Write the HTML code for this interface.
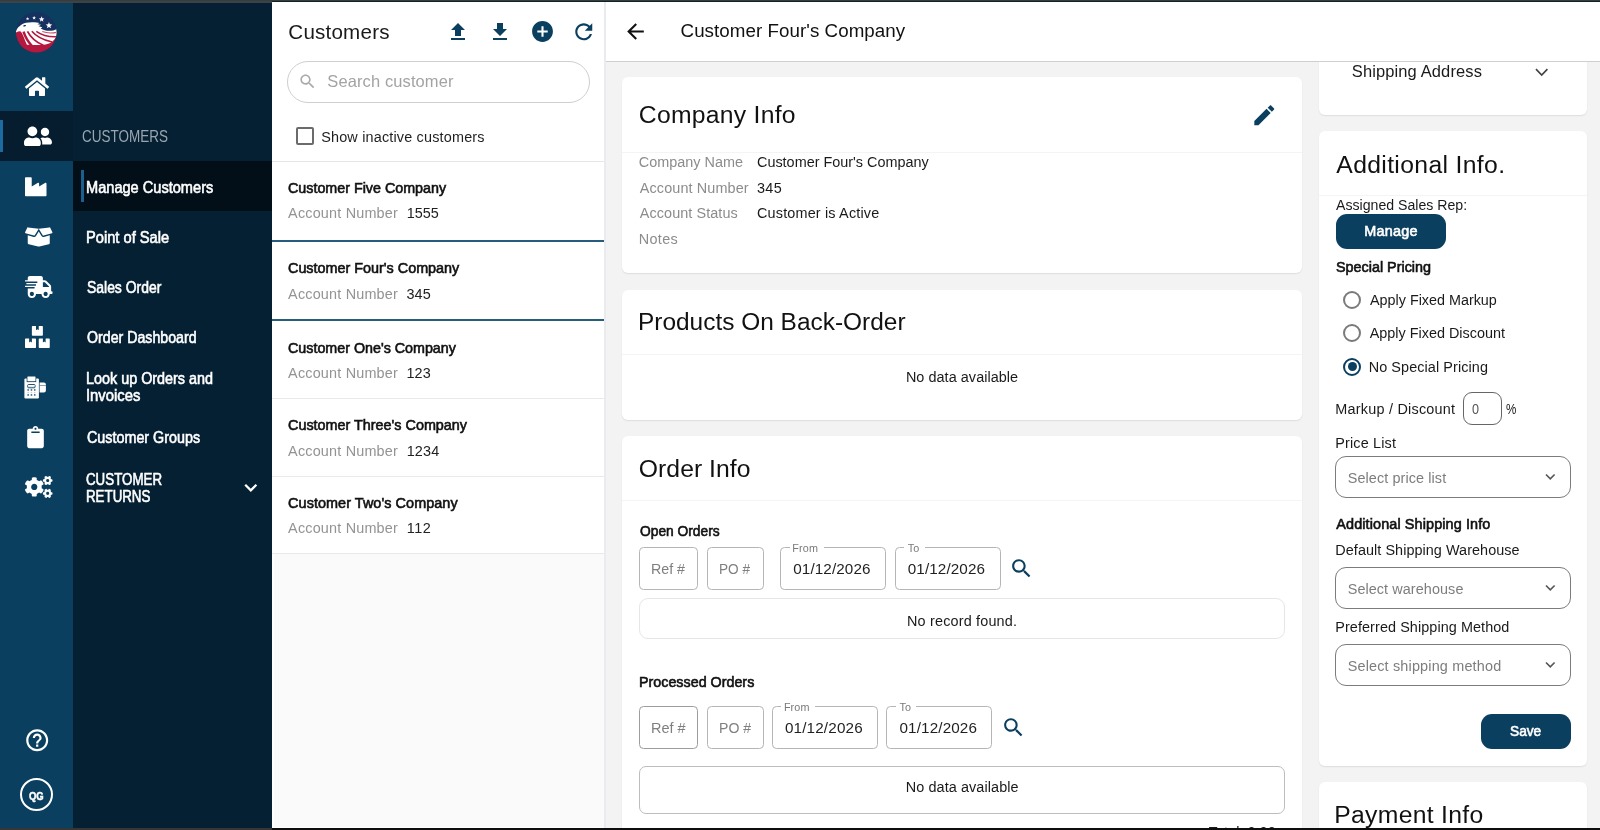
<!DOCTYPE html>
<html lang="en">
<head>
<meta charset="utf-8">
<title>Customers</title>
<style>
html,body{margin:0;padding:0;height:830px;overflow:hidden;}
body{width:1600px;height:830px;overflow:hidden;position:relative;background:#f3f3f3;font-family:"Liberation Sans",sans-serif;}
.a{position:absolute;display:block;}
.t{position:absolute;white-space:nowrap;line-height:1;transform-origin:0 0;font-family:"Liberation Sans",sans-serif;}
.b{font-weight:700;}
.m{-webkit-text-stroke:0.6px currentColor;}
.s{-webkit-text-stroke:0.6px currentColor;}
.card{position:absolute;background:#fff;border-radius:6px;box-shadow:0 1px 1.5px rgba(0,0,0,.09);}
.hr{position:absolute;height:1px;background:#f4f4f4;}
.inp{position:absolute;box-sizing:border-box;border:1px solid #b5b5b5;border-radius:4.5px;background:#fff;}
.sel{position:absolute;box-sizing:border-box;border:1px solid #7c7c7c;border-radius:11px;background:#fff;}
.btn{position:absolute;background:#0b3f5f;border-radius:11px;}
.lbl{position:absolute;background:#fff;height:3px;}
svg{position:absolute;overflow:visible;}
</style>
</head>
<body>
<div id="app" style="position:absolute;left:0;top:0;width:1600px;height:830px;overflow:hidden;">
<!-- ===== backgrounds ===== -->
<div class="a" id="rail" style="left:0;top:0;width:73px;height:830px;background:#0b3f5f;"></div>
<div class="a" id="side" style="left:73px;top:0;width:199px;height:830px;background:#062033;"></div>
<div class="a" style="left:0;top:111px;width:73px;height:50px;background:#051d2e;"></div>
<div class="a" style="left:0;top:120px;width:3px;height:32px;background:#1b6aa0;"></div>
<div class="a" style="left:73px;top:161px;width:199px;height:50px;background:#020e18;"></div>
<div class="a" style="left:81px;top:170px;width:3px;height:32px;background:#1c5f8c;"></div>

<div class="a" id="list" style="left:272px;top:0;width:332px;height:830px;background:#fafafa;"></div>
<div class="a" style="left:272px;top:0;width:332px;height:553px;background:#fff;"></div>
<div class="a" style="left:272px;top:553px;width:2.3px;height:277px;background:#fff;"></div>
<div class="a" style="left:272px;top:826.8px;width:332px;height:2px;background:#fff;"></div>
<div class="a" style="left:604px;top:0;width:2px;height:830px;background:#eaebee;"></div>
<!-- list dividers -->
<div class="a" style="left:272px;top:161px;width:332px;height:1px;background:#e6e6e6;"></div>
<div class="a" style="left:272px;top:240px;width:332px;height:2px;background:#265c7e;"></div>
<div class="a" style="left:272px;top:319px;width:332px;height:2px;background:#265c7e;"></div>
<div class="a" style="left:272px;top:398px;width:332px;height:1px;background:#e9e9e9;"></div>
<div class="a" style="left:272px;top:476px;width:332px;height:1px;background:#e9e9e9;"></div>
<div class="a" style="left:272px;top:553px;width:332px;height:1px;background:#e9e9e9;"></div>
<!-- search box -->
<div class="a" style="left:287px;top:61px;width:303px;height:42px;box-sizing:border-box;border:1px solid #cfcfcf;border-radius:21px;background:#fff;"></div>
<!-- checkbox -->
<div class="a" style="left:296px;top:127px;width:18px;height:18px;box-sizing:border-box;border:2px solid #6b6b6b;border-radius:2px;background:#fff;"></div>

<!-- ===== cards (main column) ===== -->
<div class="card" style="left:622px;top:77px;width:680px;height:196px;"></div>
<div class="hr" style="left:622px;top:152px;width:680px;"></div>
<div class="card" style="left:622px;top:290px;width:680px;height:130px;"></div>
<div class="hr" style="left:622px;top:354px;width:680px;"></div>
<div class="card" style="left:622px;top:436px;width:680px;height:420px;"></div>
<div class="hr" style="left:622px;top:500px;width:680px;"></div>

<!-- open orders inputs -->
<div class="inp" style="left:639px;top:547px;width:59px;height:43px;"></div>
<div class="inp" style="left:707px;top:547px;width:57px;height:43px;"></div>
<div class="inp" style="left:780px;top:547px;width:106px;height:43px;"></div>
<div class="lbl" style="left:789.5px;top:546px;width:34px;"></div>
<div class="inp" style="left:895px;top:547px;width:106px;height:43px;"></div>
<div class="lbl" style="left:904px;top:546px;width:20.5px;"></div>
<div class="a" style="left:639px;top:598px;width:646px;height:41px;box-sizing:border-box;border:1px solid #e6e6e6;border-radius:9px;background:#fff;"></div>
<!-- processed orders inputs -->
<div class="inp" style="left:639px;top:706px;width:59px;height:43px;border-color:#9d9d9d;"></div>
<div class="inp" style="left:707px;top:706px;width:57px;height:43px;"></div>
<div class="inp" style="left:772px;top:706px;width:106px;height:43px;"></div>
<div class="lbl" style="left:781px;top:705px;width:34px;"></div>
<div class="inp" style="left:886px;top:706px;width:106px;height:43px;"></div>
<div class="lbl" style="left:895.5px;top:705px;width:20.5px;"></div>
<div class="a" style="left:639px;top:766px;width:646px;height:48px;box-sizing:border-box;border:1px solid #bdbdbd;border-radius:7px;background:#fff;"></div>

<!-- ===== right column ===== -->
<div class="card" style="left:1319px;top:40px;width:268px;height:75px;"></div>
<div class="card" style="left:1319px;top:131px;width:268px;height:634.5px;"></div>
<div class="hr" style="left:1319px;top:195px;width:268px;"></div>
<div class="card" style="left:1319px;top:782px;width:268px;height:80px;"></div>
<div class="btn" style="left:1336px;top:213.5px;width:110px;height:35px;"></div>
<!-- radios -->
<div class="a" style="left:1343px;top:290.5px;width:18px;height:18px;box-sizing:border-box;border:2px solid #7a7a7a;border-radius:50%;background:#fff;"></div>
<div class="a" style="left:1343px;top:324px;width:18px;height:18px;box-sizing:border-box;border:2px solid #7a7a7a;border-radius:50%;background:#fff;"></div>
<div class="a" style="left:1343px;top:357.5px;width:18px;height:18px;box-sizing:border-box;border:2px solid #0b3f5f;border-radius:50%;background:#fff;"></div>
<div class="a" style="left:1347.5px;top:362px;width:9px;height:9px;border-radius:50%;background:#0b3f5f;"></div>
<!-- markup input -->
<div class="a" style="left:1463px;top:392px;width:38.5px;height:33px;box-sizing:border-box;border:1px solid #666;border-radius:9px;background:#fff;"></div>
<!-- selects -->
<div class="sel" style="left:1335px;top:456px;width:235.5px;height:42px;"></div>
<div class="sel" style="left:1335px;top:567px;width:235.5px;height:42px;"></div>
<div class="sel" style="left:1335px;top:644px;width:235.5px;height:42px;"></div>
<div class="btn" style="left:1481px;top:713.5px;width:89.5px;height:35.5px;"></div>

<!-- ===== header (over cards) ===== -->
<div class="a" id="hdr" style="left:606px;top:0;width:994px;height:61px;background:#fff;border-bottom:1px solid #cfcfcf;"></div>

<!-- logo -->
<svg id="logo" style="left:16.3px;top:11.5px;" width="40.6" height="40.6" viewBox="0 0 41 41">
  <defs><clipPath id="lc"><circle cx="20.5" cy="20.5" r="20.5"/></clipPath></defs>
  <g clip-path="url(#lc)">
    <rect x="0" y="0" width="41" height="41" fill="#16305f"/>
    <path d="M-1 42 L-1 19 L20 19.500 L42 20.500 L42 42 Z" fill="#b5173f"/>
    <path fill="#fff" d="M-0.5 20.8 C0.3 17.5 1.8 15.6 3.6 14.3 C5.5 12.6 7.6 11.3 10 10.8 C13.5 10.1 17.5 10.1 20.9 10.5 L23.8 11 L21.6 12.3 L25.3 12.8 L22.8 14.3 L26.6 15.3 L25 16.6 C27.5 18.2 30.5 19 33.5 19 C36.5 19 39 18.3 41.5 17 L41.5 22.5 C40.5 25.5 39.5 27.3 38 28.6 C36.5 30.3 34.5 31.6 32.5 32 C29 33 25.5 33.4 22 33.4 L16.5 33.3 L11 33.2 C9.8 30.5 8.6 27.5 7.6 24.8 C6.9 22.8 6 20.9 4.6 19.6 C3.2 19.4 1.6 19.9 -0.5 20.8 Z"/>
    <path d="M7.6 19.9 Q 10.2 28 16 34.2" fill="none" stroke="#b5173f" stroke-width="2.5"/>
    <path d="M11.6 19.6 Q 16.5 29 27.5 33.6" fill="none" stroke="#b5173f" stroke-width="1.8"/>
    <path d="M16 19.5 Q 22.5 27.3 36.5 30.4" fill="none" stroke="#b5173f" stroke-width="1.6"/>
    <path d="M20.5 19.6 Q 28.5 25.4 41 25" fill="none" stroke="#b5173f" stroke-width="1.4"/>
    <path d="M26.5 19.8 Q 33 22.2 41 20.6" fill="none" stroke="#b5173f" stroke-width="1.1" opacity=".75"/>
    <ellipse cx="8.7" cy="13.9" rx="1.5" ry="0.75" fill="#16305f" transform="rotate(-12 8.7 13.9)"/>
    <polygon fill="#fff" points="11.70,5.00 12.17,6.25 13.51,6.31 12.46,7.15 12.82,8.44 11.70,7.70 10.58,8.44 10.94,7.15 9.89,6.31 11.23,6.25"/>
    <polygon fill="#fff" points="18.30,3.80 18.82,5.19 20.30,5.25 19.14,6.17 19.53,7.60 18.30,6.78 17.07,7.60 17.46,6.17 16.30,5.25 17.78,5.19"/>
    <polygon fill="#fff" points="25.90,4.40 26.64,6.38 28.75,6.47 27.10,7.79 27.66,9.83 25.90,8.66 24.14,9.83 24.70,7.79 23.05,6.47 25.16,6.38"/>
    <polygon fill="#fff" points="33.30,10.10 34.16,12.41 36.63,12.52 34.70,14.05 35.36,16.43 33.30,15.07 31.24,16.43 31.90,14.05 29.97,12.52 32.44,12.41"/>
  </g>
</svg>

<!-- rail: home (FA) 24x~20 @ center (37,86) -->
<svg style="left:25px;top:75.5px;" width="24" height="21.33" viewBox="0 0 576 512"><path fill="#fff" d="M280.37 148.26L96 300.11V464a16 16 0 0 0 16 16l112.06-.29a16 16 0 0 0 15.920-16V368a16 16 0 0 1 16-16h64a16 16 0 0 1 16 16v95.640a16 16 0 0 0 16 16.050L464 480a16 16 0 0 0 16-16V300L295.670 148.260a12.190 12.190 0 0 0-15.300 0zM571.600 251.470L488 182.560V44.050a12 12 0 0 0-12-12h-56a12 12 0 0 0-12 12v72.610L318.470 43a48 48 0 0 0-61 0L4.340 251.470a12 12 0 0 0-1.600 16.900l25.500 31A12 12 0 0 0 45.150 301l235.220-193.740a12.190 12.190 0 0 1 15.300 0L530.900 301a12 12 0 0 0 16.900-1.600l25.500-31a12 12 0 0 0-1.700-16.930z"/></svg>

<!-- users (FA user-friends) 28x22.4 -->
<svg style="left:24px;top:125.3px;" width="28" height="22.4" viewBox="0 0 640 512"><path fill="#fff" d="M192 256c61.900 0 112-50.100 112-112S253.900 32 192 32 80 82.100 80 144s50.100 112 112 112zm76.800 32h-8.300c-20.800 10-43.900 16-68.500 16s-47.600-6-68.500-16h-8.300C51.600 288 0 339.600 0 403.200V432c0 26.500 21.500 48 48 48h288c26.500 0 48-21.500 48-48v-28.800c0-63.600-51.600-115.200-115.200-115.200zM480 256c53 0 96-43 96-96s-43-96-96-96-96 43-96 96 43 96 96 96zm48 32h-3.800c-13.900 4.800-28.600 8-44.200 8s-30.300-3.200-44.200-8H432c-20.400 0-39.200 5.900-55.700 15.400 24.400 26.300 39.700 61.200 39.700 99.800v38.400c0 2.200-.5 4.300-.6 6.400H592c26.500 0 48-21.500 48-48 0-61.900-50.100-112-112-112z"/></svg>

<!-- industry (FA) 22x22 -->
<svg style="left:24.500px;top:175.500px;" width="21.500" height="21.500" viewBox="0 0 512 512"><path fill="#fff" d="M475.115 163.781L336 252.309v-68.280c0-18.916-20.931-30.399-36.885-20.248L160 252.309V56c0-13.255-10.745-24-24-24H24C10.745 32 0 42.745 0 56v400c0 13.255 10.745 24 24 24h464c13.255 0 24-10.745 24-24V184.029c0-18.917-20.931-30.399-36.885-20.248z"/></svg>

<!-- box-open (FA) 27.5x22 -->
<svg style="left:24.500px;top:225.700px;" width="27.500" height="22" viewBox="0 0 640 512"><path fill="#fff" d="M425.700 256c-16.900 0-32.800-9-41.400-23.400L320 126l-64.200 106.600c-8.700 14.500-24.600 23.500-41.500 23.500-4.500 0-9-.6-13.300-1.900L64 215v178c0 14.700 10 27.500 24.200 31l216.200 54.100c10.200 2.500 20.900 2.500 31 0L551.800 424c14.200-3.600 24.200-16.400 24.200-31V215l-137 39.100c-4.300 1.300-8.800 1.900-13.300 1.900zm212.600-112.200L586.800 41c-3.100-6.200-9.800-9.800-16.700-8.900L320 64l91.700 152.100c3.800 6.300 11.400 9.300 18.500 7.300l197.900-56.500c9.900-2.900 14.700-13.900 10.200-23.100zM53.200 41L1.700 143.800c-4.600 9.200.3 20.200 10.100 23l197.900 56.500c7.100 2 14.700-1 18.500-7.300L320 64 69.800 32.100c-6.900-.8-13.500 2.700-16.600 8.900z"/></svg>

<!-- shipping-fast (FA) 27.5x22 -->
<svg style="left:24.500px;top:275.500px;" width="27.500" height="22" viewBox="0 0 640 512"><path fill="#fff" d="M624 352h-16V243.900c0-12.700-5.100-24.900-14.100-33.900L494 110.100c-9-9-21.200-14.100-33.900-14.100H416V48c0-26.500-21.500-48-48-48H112C85.500 0 64 21.500 64 48v48H8c-4.400 0-8 3.600-8 8v16c0 4.400 3.600 8 8 8h272c4.400 0 8 3.600 8 8v16c0 4.400-3.600 8-8 8H40c-4.400 0-8 3.600-8 8v16c0 4.400 3.600 8 8 8h208c4.400 0 8 3.600 8 8v16c0 4.400-3.600 8-8 8H8c-4.400 0-8 3.600-8 8v16c0 4.400 3.600 8 8 8h208c4.400 0 8 3.600 8 8v16c0 4.400-3.600 8-8 8H64v128c0 53 43 96 96 96s96-43 96-96h128c0 53 43 96 96 96s96-43 96-96h48c8.800 0 16-7.200 16-16v-32c0-8.800-7.200-16-16-16zM160 464c-26.500 0-48-21.500-48-48s21.500-48 48-48 48 21.500 48 48-21.500 48-48 48zm320 0c-26.500 0-48-21.500-48-48s21.500-48 48-48 48 21.500 48 48-21.500 48-48 48zm80-208H416V144h44.100l99.900 99.900V256z"/></svg>

<!-- boxes (FA) 25x22 -->
<svg style="left:24.500px;top:326px;" width="24.750" height="22" viewBox="0 0 576 512"><path fill="#fff" d="M560 288h-80v96l-32-21.300-32 21.300v-96h-80c-8.800 0-16 7.200-16 16v192c0 8.800 7.200 16 16 16h224c8.800 0 16-7.200 16-16V304c0-8.800-7.200-16-16-16zm-384-64h224c8.800 0 16-7.200 16-16V16c0-8.800-7.200-16-16-16h-80v96l-32-21.300L256 96V0h-80c-8.800 0-16 7.200-16 16v192c0 8.800 7.200 16 16 16zm64 64h-80v96l-32-21.300L96 384v-96H16c-8.800 0-16 7.200-16 16v192c0 8.800 7.200 16 16 16h224c8.800 0 16-7.200 16-16V304c0-8.800-7.200-16-16-16z"/></svg>

<!-- POS terminal (custom) -->
<svg style="left:24.1px;top:375.5px;" width="23" height="23" viewBox="0 0 23 23">
  <rect x="0.4" y="2.4" width="14.5" height="20.1" rx="1.2" fill="#fff"/>
  <rect x="2.7" y="2" width="9.5" height="4.1" fill="#0b3f5f"/>
  <rect x="3.4" y="0.4" width="8.1" height="4.9" rx="0.5" fill="#fff"/>
  <rect x="3.7" y="8.5" width="7.4" height="3.3" rx="0.9" fill="#e4e8eb" stroke="#0b3f5f" stroke-width="0.9"/>
  <rect x="4.3" y="9" width="6.2" height="1.1" fill="#fff"/>
  <rect x="3.4" y="13.3" width="1.5" height="1.3" fill="#0b3f5f" opacity="1"/><rect x="6.7" y="13.3" width="1.5" height="1.3" fill="#0b3f5f" opacity="1"/><rect x="10.0" y="13.3" width="1.5" height="1.3" fill="#0b3f5f" opacity="1"/><rect x="3.4" y="15.9" width="1.5" height="1.3" fill="#0b3f5f" opacity="0.22"/><rect x="6.7" y="15.9" width="1.5" height="1.3" fill="#0b3f5f" opacity="0.22"/><rect x="10.0" y="15.9" width="1.5" height="1.3" fill="#0b3f5f" opacity="0.22"/><rect x="3.4" y="18.3" width="1.5" height="1.3" fill="#0b3f5f" opacity="1"/><rect x="6.7" y="18.3" width="1.5" height="1.3" fill="#0b3f5f" opacity="1"/><rect x="10.0" y="18.3" width="1.5" height="1.3" fill="#0b3f5f" opacity="1"/>
  <path d="M15.6 6.400h4.300a2 2 0 0 1 2 2v6.100a2 2 0 0 1-2 2h-4.300z" fill="#fff"/>
  <rect x="15.6" y="9.400" width="6.300" height="0.600" fill="#0b3f5f" opacity=".8"/>
</svg>

<!-- clipboard (FA) 17.500x22 -->
<svg style="left:27.200px;top:426.300px;" width="17" height="22.200" viewBox="0 0 384 512"><path fill="#fff" fill-rule="evenodd" d="M384 112v352c0 26.510-21.490 48-48 48H48c-26.510 0-48-21.490-48-48V112c0-26.510 21.490-48 48-48h80c0-35.290 28.710-64 64-64s64 28.710 64 64h80c26.510 0 48 21.490 48 48zM192 40c-13.255 0-24 10.745-24 24s10.745 24 24 24 24-10.745 24-24-10.745-24-24-24m96 114v-20a6 6 0 0 0-6-6H102a6 6 0 0 0-6 6v20a6 6 0 0 0 6 6h180a6 6 0 0 0 6-6z"/></svg>

<!-- cogs (FA) 27.5x22 -->
<svg style="left:24.500px;top:476.300px;" width="27.500" height="22" viewBox="0 0 640 512"><path fill="#fff" fill-rule="evenodd" d="M512.100 191l-8.200 14.300c-3 5.300-9.400 7.500-15.100 5.400-11.800-4.400-22.600-10.700-32.100-18.600-4.600-3.800-5.800-10.500-2.800-15.700l8.200-14.300c-6.900-8-12.300-17.300-15.900-27.400h-16.500c-6 0-11.200-4.300-12.200-10.300-2-12-2.100-24.600 0-37.100 1-6 6.200-10.400 12.200-10.400h16.500c3.600-10.100 9-19.400 15.900-27.400l-8.200-14.300c-3-5.200-1.900-11.900 2.800-15.700 9.500-7.900 20.400-14.200 32.100-18.600 5.700-2.100 12.100.1 15.100 5.400l8.200 14.300c10.500-1.900 21.200-1.900 31.700 0L552 6.300c3-5.300 9.400-7.500 15.100-5.400 11.800 4.400 22.600 10.700 32.100 18.600 4.600 3.800 5.800 10.500 2.800 15.700l-8.200 14.300c6.900 8 12.300 17.300 15.900 27.400h16.500c6 0 11.200 4.300 12.200 10.300 2 12 2.100 24.600 0 37.100-1 6-6.200 10.400-12.200 10.400h-16.500c-3.600 10.100-9 19.400-15.900 27.400l8.200 14.300c3 5.200 1.900 11.900-2.800 15.700-9.500 7.900-20.400 14.200-32.100 18.600-5.700 2.100-12.100-.1-15.100-5.400l-8.200-14.300c-10.400 1.900-21.200 1.900-31.700 0zm-10.500-58.800c38.500 29.600 82.400-14.300 52.800-52.800-38.500-29.700-82.400 14.300-52.800 52.800zM386.300 286.100l33.700 16.800c10.100 5.800 14.500 18.100 10.500 29.100-8.900 24.200-26.400 46.400-42.600 65.800-7.400 8.900-20.200 11.100-30.300 5.300l-29.100-16.800c-16 13.700-34.600 24.600-54.900 31.700v33.600c0 11.600-8.300 21.600-19.700 23.600-24.600 4.200-50.400 4.400-75.900 0-11.500-2-20-11.900-20-23.600V418c-20.300-7.200-38.900-18-54.900-31.700L74 403c-10 5.800-22.900 3.600-30.300-5.300-16.200-19.400-33.300-41.600-42.200-65.700-4-10.900.4-23.200 10.500-29.100l33.300-16.800c-3.900-20.900-3.900-42.400 0-63.400L12 205.800c-10.100-5.800-14.600-18.100-10.500-29 8.900-24.200 26-46.400 42.200-65.800 7.400-8.900 20.200-11.100 30.300-5.300l29.100 16.800c16-13.700 34.600-24.600 54.900-31.700V57.100c0-11.500 8.200-21.500 19.600-23.500 24.600-4.200 50.500-4.400 76-.1 11.500 2 20 11.900 20 23.600v33.600c20.300 7.200 38.900 18 54.900 31.700l29.100-16.800c10-5.800 22.900-3.600 30.300 5.300 16.200 19.400 33.200 41.600 42.100 65.800 4 10.900.1 23.200-10 29.100l-33.700 16.800c3.900 21 3.900 42.500 0 63.500zm-117.600 21.100c59.200-77-28.700-164.900-105.700-105.700-59.200 77 28.700 164.900 105.700 105.700zm243.400 182.700l-8.200 14.300c-3 5.300-9.400 7.500-15.100 5.400-11.800-4.400-22.600-10.700-32.100-18.600-4.600-3.800-5.800-10.500-2.800-15.700l8.200-14.300c-6.900-8-12.300-17.300-15.900-27.400h-16.500c-6 0-11.200-4.300-12.200-10.300-2-12-2.100-24.600 0-37.100 1-6 6.200-10.400 12.200-10.400h16.500c3.600-10.100 9-19.400 15.900-27.400l-8.200-14.300c-3-5.200-1.900-11.900 2.800-15.700 9.500-7.900 20.400-14.200 32.100-18.600 5.700-2.100 12.100.1 15.100 5.400l8.200 14.300c10.500-1.900 21.200-1.900 31.700 0l8.200-14.300c3-5.300 9.400-7.500 15.100-5.400 11.800 4.400 22.600 10.700 32.100 18.600 4.600 3.800 5.800 10.500 2.800 15.700l-8.200 14.300c6.900 8 12.300 17.300 15.900 27.400h16.500c6 0 11.200 4.300 12.200 10.300 2 12 2.100 24.600 0 37.100-1 6-6.200 10.400-12.200 10.400h-16.500c-3.600 10.100-9 19.400-15.900 27.400l8.200 14.300c3 5.200 1.900 11.900-2.800 15.700-9.500 7.900-20.400 14.200-32.100 18.600-5.700 2.100-12.100-.1-15.100-5.400l-8.200-14.300c-10.400 1.900-21.200 1.900-31.700 0zM501.600 431c38.500 29.600 82.400-14.300 52.800-52.800-38.500-29.600-82.400 14.300-52.800 52.800z"/></svg>

<!-- sidebar chevron -->
<svg style="left:240px;top:478px;" width="22" height="20" viewBox="0 0 22 20"><polyline points="5.200,6.800 10.800,12.400 16.400,6.800" fill="none" stroke="#fff" stroke-width="2.300"/></svg>

<!-- help outline 26.4px @ center (37,740.5) -->
<svg style="left:23.800px;top:727.300px;" width="26.400" height="26.400" viewBox="0 0 24 24"><path fill="#fff" d="M11 18h2v-2h-2v2zm1-16C6.480 2 2 6.480 2 12s4.480 10 10 10 10-4.480 10-10S17.520 2 12 2zm0 18c-4.410 0-8-3.590-8-8s3.590-8 8-8 8 3.590 8 8-3.590 8-8 8zm0-14c-2.210 0-4 1.790-4 4h2c0-1.100.9-2 2-2s2 .9 2 2c0 2-3 1.750-3 5h2c0-2.250 3-2.500 3-5 0-2.210-1.790-4-4-4z"/></svg>
<!-- avatar circle -->
<div class="a" style="left:19.800px;top:778.300px;width:33px;height:33px;box-sizing:border-box;border:2px solid #fff;border-radius:50%;"></div>

<!-- list header icons (24px) -->
<svg style="left:446px;top:20px;" width="24" height="24" viewBox="0 0 24 24"><path fill="#0b3f5f" d="M9 16h6v-6h4l-7-7-7 7h4zm-4 2h14v2H5z"/></svg>
<svg style="left:488px;top:20px;" width="24" height="24" viewBox="0 0 24 24"><path fill="#0b3f5f" d="M19 9h-4V3H9v6H5l7 7 7-7zM5 18v2h14v-2H5z"/></svg>
<svg style="left:529.600px;top:19px;" width="25" height="25" viewBox="0 0 24 24"><path fill="#0b3f5f" d="M12 2C6.480 2 2 6.480 2 12s4.480 10 10 10 10-4.480 10-10S17.520 2 12 2zm5 11h-4v4h-2v-4H7v-2h4V7h2v4h4v2z"/></svg>
<svg style="left:570.600px;top:18.700px;" width="25.500" height="25.500" viewBox="0 0 24 24"><path fill="#0b3f5f" d="M17.650 6.350C16.200 4.900 14.210 4 12 4c-4.420 0-7.990 3.580-7.990 8s3.570 8 7.990 8c3.730 0 6.840-2.550 7.730-6h-2.080c-.82 2.330-3.040 4-5.650 4-3.310 0-6-2.690-6-6s2.690-6 6-6c1.660 0 3.140.69 4.220 1.780L13 11h7V4l-2.350 2.350z"/></svg>
<!-- search icon in box -->
<svg style="left:297.500px;top:72px;" width="19" height="19" viewBox="0 0 24 24"><path fill="#aaaaaa" d="M15.500 14h-.79l-.28-.27C15.410 12.590 16 11.110 16 9.500 16 5.910 13.090 3 9.500 3S3 5.910 3 9.500 5.910 16 9.500 16c1.610 0 3.090-.59 4.230-1.570l.27.28v.79l5 4.990L20.490 19l-4.990-5zm-6 0C7.010 14 5 11.990 5 9.500S7.010 5 9.500 5 14 7.010 14 9.500 11.990 14 9.500 14z"/></svg>

<!-- back arrow -->
<svg style="left:622.500px;top:19.300px;" width="25" height="25" viewBox="0 0 24 24"><path fill="#111" d="M20 11H7.830l5.590-5.590L12 4l-8 8 8 8 1.410-1.410L7.830 13H20v-2z"/></svg>
<!-- edit pencil 26px center (1264.5,115) -->
<svg style="left:1251.200px;top:102px;" width="26.500" height="26.500" viewBox="0 0 24 24"><path fill="#0b3f5f" d="M3 17.250V21h3.750L17.810 9.940l-3.750-3.750L3 17.250zM20.710 7.040c.39-.39.39-1.020 0-1.410l-2.340-2.340c-.39-.39-1.020-.39-1.410 0l-1.830 1.830 3.750 3.750 1.830-1.830z"/></svg>
<!-- search icons (orders) -->
<svg style="left:1009.300px;top:556.300px;" width="25" height="25" viewBox="0 0 24 24"><path fill="#0b3f5f" d="M15.500 14h-.79l-.28-.27C15.410 12.590 16 11.110 16 9.500 16 5.910 13.090 3 9.500 3S3 5.910 3 9.500 5.910 16 9.500 16c1.610 0 3.090-.59 4.230-1.570l.27.28v.79l5 4.990L20.490 19l-4.990-5zm-6 0C7.010 14 5 11.990 5 9.500S7.010 5 9.500 5 14 7.010 14 9.500 11.990 14 9.500 14z"/></svg>
<svg style="left:1000.800px;top:715.300px;" width="25" height="25" viewBox="0 0 24 24"><path fill="#0b3f5f" d="M15.500 14h-.79l-.28-.27C15.410 12.590 16 11.110 16 9.500 16 5.910 13.090 3 9.500 3S3 5.910 3 9.500 5.910 16 9.500 16c1.610 0 3.090-.59 4.230-1.570l.27.28v.79l5 4.990L20.490 19l-4.990-5zm-6 0C7.010 14 5 11.990 5 9.500S7.010 5 9.500 5 14 7.010 14 9.500 11.990 14 9.500 14z"/></svg>

<!-- shipping chevron -->
<svg style="left:1531px;top:62px;" width="22" height="20" viewBox="0 0 22 20"><polyline points="5,7.200 10.700,13 16.400,7.200" fill="none" stroke="#444" stroke-width="1.700"/></svg>
<!-- select chevrons -->
<svg style="left:1540px;top:467px;" width="20" height="20" viewBox="0 0 20 20"><polyline points="6,7.500 10.300,11.800 14.600,7.500" fill="none" stroke="#555" stroke-width="1.600"/></svg>
<svg style="left:1540px;top:578px;" width="20" height="20" viewBox="0 0 20 20"><polyline points="6,7.500 10.300,11.800 14.600,7.500" fill="none" stroke="#555" stroke-width="1.600"/></svg>
<svg style="left:1540px;top:655px;" width="20" height="20" viewBox="0 0 20 20"><polyline points="6,7.500 10.300,11.800 14.600,7.500" fill="none" stroke="#555" stroke-width="1.600"/></svg>

<div id="tx" style="position:absolute;left:0;top:0;width:1600px;height:830px;will-change:transform;">
<span class="t" style="left:81.98px;top:128px;font-size:16.48px;color:#9aa6af;transform:scaleX(0.8194);">CUSTOMERS</span>
<span class="t m" style="left:86.41px;top:179px;font-size:16.48px;color:#ffffff;transform:scaleX(0.8857);">Manage Customers</span>
<span class="t m" style="left:86.41px;top:229px;font-size:16.48px;color:#ffffff;transform:scaleX(0.8902);">Point of Sale</span>
<span class="t m" style="left:87.30px;top:279px;font-size:16.48px;color:#ffffff;transform:scaleX(0.8455);">Sales Order</span>
<span class="t m" style="left:87.30px;top:329px;font-size:16.48px;color:#ffffff;transform:scaleX(0.8614);">Order Dashboard</span>
<span class="t m" style="left:86.43px;top:370px;font-size:16.48px;color:#ffffff;transform:scaleX(0.8726);">Look up Orders and</span>
<span class="t m" style="left:86.40px;top:387px;font-size:16.48px;color:#ffffff;transform:scaleX(0.9008);">Invoices</span>
<span class="t m" style="left:87.30px;top:429px;font-size:16.48px;color:#ffffff;transform:scaleX(0.8704);">Customer Groups</span>
<span class="t m" style="left:86.40px;top:472px;font-size:15.76px;color:#ffffff;transform:scaleX(0.8461);">CUSTOMER</span>
<span class="t m" style="left:85.55px;top:489px;font-size:15.76px;color:#ffffff;transform:scaleX(0.8453);">RETURNS</span>
<span class="t b" style="left:29.20px;top:790px;font-size:11.74px;color:#ffffff;transform:scaleX(0.8056);-webkit-text-stroke:0.5px currentColor;">QG</span>
<span class="t" style="left:288.30px;top:22px;font-size:20.6px;color:#1a1a1a;letter-spacing:0.206px;">Customers</span>
<span class="t" style="left:327.30px;top:73px;font-size:16.48px;color:#a3a3a3;letter-spacing:0.121px;">Search customer</span>
<span class="t" style="left:321.20px;top:130px;font-size:14.42px;color:#1f1f1f;letter-spacing:0.182px;">Show inactive customers</span>
<span class="t s" style="left:288.10px;top:181px;font-size:14.42px;color:#111111;transform:scaleX(0.9925);">Customer Five Company</span>
<span class="t" style="left:288.10px;top:206px;font-size:14.42px;color:#939393;letter-spacing:0.185px;">Account Number</span>
<span class="t" style="left:406.70px;top:206px;font-size:14.42px;color:#222222;">1555</span>
<span class="t s" style="left:288.10px;top:261px;font-size:14.42px;color:#111111;transform:scaleX(0.9977);">Customer Four&#x27;s Company</span>
<span class="t" style="left:288.10px;top:287px;font-size:14.42px;color:#939393;letter-spacing:0.185px;">Account Number</span>
<span class="t" style="left:406.50px;top:287px;font-size:14.42px;color:#222222;letter-spacing:0.100px;">345</span>
<span class="t s" style="left:288.10px;top:341px;font-size:14.42px;color:#111111;transform:scaleX(0.9918);">Customer One&#x27;s Company</span>
<span class="t" style="left:288.10px;top:366px;font-size:14.42px;color:#939393;letter-spacing:0.185px;">Account Number</span>
<span class="t" style="left:406.50px;top:366px;font-size:14.42px;color:#222222;letter-spacing:0.100px;">123</span>
<span class="t s" style="left:288.10px;top:418px;font-size:14.42px;color:#111111;transform:scaleX(0.9978);">Customer Three&#x27;s Company</span>
<span class="t" style="left:288.10px;top:444px;font-size:14.42px;color:#939393;letter-spacing:0.185px;">Account Number</span>
<span class="t" style="left:406.70px;top:444px;font-size:14.42px;color:#222222;letter-spacing:0.167px;">1234</span>
<span class="t s" style="left:288.10px;top:496px;font-size:14.42px;color:#111111;letter-spacing:0.062px;">Customer Two&#x27;s Company</span>
<span class="t" style="left:288.10px;top:521px;font-size:14.42px;color:#939393;letter-spacing:0.185px;">Account Number</span>
<span class="t" style="left:406.70px;top:521px;font-size:14.42px;color:#222222;letter-spacing:0.500px;">112</span>
<span class="t" style="left:680.55px;top:22px;font-size:18.75px;color:#111111;letter-spacing:0.052px;">Customer Four&#x27;s Company</span>
<span class="t" style="left:638.80px;top:103px;font-size:24.72px;color:#111111;letter-spacing:0.264px;">Company Info</span>
<span class="t" style="left:638.80px;top:155px;font-size:14.42px;color:#8c8c8c;letter-spacing:0.009px;">Company Name</span>
<span class="t" style="left:757.00px;top:155px;font-size:14.42px;color:#1a1a1a;">Customer Four&#x27;s Company</span>
<span class="t" style="left:639.80px;top:181px;font-size:14.42px;color:#8c8c8c;letter-spacing:0.115px;">Account Number</span>
<span class="t" style="left:757.00px;top:181px;font-size:14.42px;color:#1a1a1a;letter-spacing:0.350px;">345</span>
<span class="t" style="left:639.80px;top:206px;font-size:14.42px;color:#8c8c8c;letter-spacing:0.077px;">Account Status</span>
<span class="t" style="left:757.00px;top:206px;font-size:14.42px;color:#1a1a1a;letter-spacing:0.171px;">Customer is Active</span>
<span class="t" style="left:638.80px;top:232px;font-size:14.42px;color:#8c8c8c;letter-spacing:0.325px;">Notes</span>
<span class="t" style="left:637.82px;top:310px;font-size:24.72px;color:#111111;transform:scaleX(0.9885);">Products On Back-Order</span>
<span class="t" style="left:905.90px;top:370px;font-size:14.42px;color:#1a1a1a;letter-spacing:0.056px;">No data available</span>
<span class="t" style="left:638.80px;top:457px;font-size:24.72px;color:#111111;letter-spacing:0.044px;">Order Info</span>
<span class="t s" style="left:639.80px;top:524px;font-size:14.42px;color:#111111;transform:scaleX(0.9566);">Open Orders</span>
<span class="t" style="left:651.12px;top:561px;font-size:15.24px;color:#7f7f7f;transform:scaleX(0.9347);">Ref #</span>
<span class="t" style="left:719.41px;top:561px;font-size:15.24px;color:#7f7f7f;transform:scaleX(0.8941);">PO #</span>
<span class="t" style="left:792.30px;top:543px;font-size:10.81px;color:#7a7a7a;letter-spacing:0.133px;">From</span>
<span class="t" style="left:793.30px;top:561px;font-size:15.24px;color:#1f1f1f;letter-spacing:0.100px;">01/12/2026</span>
<span class="t" style="left:907.80px;top:543px;font-size:10.81px;color:#7a7a7a;letter-spacing:0.150px;">To</span>
<span class="t" style="left:907.80px;top:561px;font-size:15.24px;color:#1f1f1f;letter-spacing:0.100px;">01/12/2026</span>
<span class="t" style="left:907.00px;top:614px;font-size:14.42px;color:#1a1a1a;letter-spacing:0.180px;">No record found.</span>
<span class="t s" style="left:638.91px;top:675px;font-size:14.42px;color:#111111;transform:scaleX(0.9930);">Processed Orders</span>
<span class="t" style="left:650.95px;top:720px;font-size:15.24px;color:#7f7f7f;transform:scaleX(0.9500);">Ref #</span>
<span class="t" style="left:718.98px;top:720px;font-size:15.24px;color:#7f7f7f;transform:scaleX(0.9235);">PO #</span>
<span class="t" style="left:783.90px;top:702px;font-size:10.81px;color:#7a7a7a;letter-spacing:0.133px;">From</span>
<span class="t" style="left:784.90px;top:720px;font-size:15.24px;color:#1f1f1f;letter-spacing:0.167px;">01/12/2026</span>
<span class="t" style="left:899.50px;top:702px;font-size:10.81px;color:#7a7a7a;letter-spacing:0.200px;">To</span>
<span class="t" style="left:899.50px;top:720px;font-size:15.24px;color:#1f1f1f;letter-spacing:0.133px;">01/12/2026</span>
<span class="t" style="left:905.80px;top:780px;font-size:14.42px;color:#1a1a1a;letter-spacing:0.088px;">No data available</span>
<span class="t" style="left:1208.80px;top:825px;font-size:14.42px;color:#1a1a1a;letter-spacing:0.040px;">Total: 0.00</span>
<span class="t" style="left:1351.80px;top:63px;font-size:16.48px;color:#1a1a1a;letter-spacing:0.127px;">Shipping Address</span>
<span class="t" style="left:1336.30px;top:153px;font-size:24.72px;color:#111111;letter-spacing:0.347px;">Additional Info.</span>
<span class="t" style="left:1336.30px;top:198px;font-size:14.42px;color:#1a1a1a;transform:scaleX(0.9805);">Assigned Sales Rep:</span>
<span class="t m" style="left:1364.30px;top:224px;font-size:14.42px;color:#ffffff;letter-spacing:0.240px;">Manage</span>
<span class="t s" style="left:1336.30px;top:260px;font-size:14.42px;color:#111111;transform:scaleX(0.9968);">Special Pricing</span>
<span class="t" style="left:1369.70px;top:293px;font-size:14.42px;color:#1a1a1a;transform:scaleX(0.9961);">Apply Fixed Markup</span>
<span class="t" style="left:1369.70px;top:326px;font-size:14.42px;color:#1a1a1a;">Apply Fixed Discount</span>
<span class="t" style="left:1368.70px;top:360px;font-size:14.42px;color:#1a1a1a;letter-spacing:0.088px;">No Special Pricing</span>
<span class="t" style="left:1335.30px;top:402px;font-size:14.42px;color:#1a1a1a;letter-spacing:0.231px;">Markup / Discount</span>
<span class="t" style="left:1471.90px;top:402px;font-size:14.42px;color:#555555;transform:scaleX(0.8750);">0</span>
<span class="t" style="left:1506.30px;top:402px;font-size:14.42px;color:#1a1a1a;transform:scaleX(0.8083);">%</span>
<span class="t" style="left:1335.30px;top:436px;font-size:14.42px;color:#1a1a1a;letter-spacing:0.156px;">Price List</span>
<span class="t" style="left:1347.70px;top:471px;font-size:14.42px;color:#7d7d7d;letter-spacing:0.100px;">Select price list</span>
<span class="t s" style="left:1336.30px;top:517px;font-size:14.42px;color:#111111;letter-spacing:0.117px;">Additional Shipping Info</span>
<span class="t" style="left:1335.30px;top:543px;font-size:14.42px;color:#1a1a1a;letter-spacing:0.056px;">Default Shipping Warehouse</span>
<span class="t" style="left:1347.70px;top:582px;font-size:14.42px;color:#7d7d7d;letter-spacing:0.080px;">Select warehouse</span>
<span class="t" style="left:1335.30px;top:620px;font-size:14.42px;color:#1a1a1a;letter-spacing:0.079px;">Preferred Shipping Method</span>
<span class="t" style="left:1347.70px;top:659px;font-size:14.42px;color:#7d7d7d;letter-spacing:0.176px;">Select shipping method</span>
<span class="t m" style="left:1510.30px;top:724px;font-size:14.42px;color:#ffffff;transform:scaleX(0.9515);">Save</span>
<span class="t" style="left:1334.30px;top:803px;font-size:24.72px;color:#111111;letter-spacing:0.291px;">Payment Info</span>
</div>

<!-- top / bottom window edges -->
<div class="a" style="left:0;top:0;width:1600px;height:1px;background:#343e3f;"></div>
<div class="a" style="left:0;top:1px;width:272px;height:1.8px;background:#3c4246;"></div>
<div class="a" style="left:272px;top:1px;width:1328px;height:1px;background:#162122;"></div>
<div class="a" style="left:0;top:828.2px;width:272px;height:1.8px;background:#363636;"></div>
<div class="a" style="left:272px;top:828.3px;width:1328px;height:1.7px;background:#0e0e0e;"></div>
</div>
</body>
</html>
